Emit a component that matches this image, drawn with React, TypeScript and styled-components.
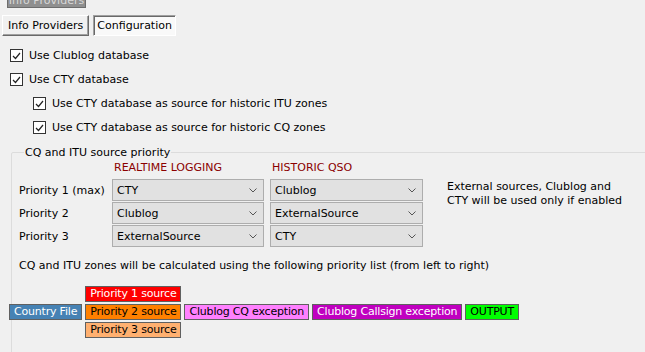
import React from 'react';
import styled, { createGlobalStyle } from 'styled-components';

const GlobalStyle = createGlobalStyle`
  body {
    margin: 0;
    background: #f0f0f0;
    font-family: "DejaVu Sans", Verdana, sans-serif;
    font-size: 11px;
    color: #000;
  }
`;

const Page = styled.div`
  width: 645px;
  height: 352px;
  overflow: hidden;
  background: #f0f0f0;
`;

const CutButton = styled.div`
  margin: -12px 0 0 7px;
  width: 79px;
  height: 20px;
  box-sizing: border-box;
  border: 1px solid #6d6d6d;
  background: #8f8f8f;
  color: #d8d8d8;
  text-align: center;
  line-height: 24px;
  overflow: hidden;
`;

const TabBar = styled.div`
  display: flex;
  gap: 4px;
  margin: 7px 0 0 2px;
`;

const Tab = styled.div<{ $active?: boolean }>`
  height: 21px;
  box-sizing: border-box;
  padding: 0 ${(p) => (p.$active ? '3px' : '5px')};
  line-height: 19px;
  border: 1px solid;
  border-color: ${(p) =>
    p.$active ? '#a0a0a0 #ffffff #ffffff #a0a0a0' : '#ffffff #696969 #696969 #ffffff'};
  background: ${(p) => (p.$active ? '#f9f9f9' : '#f0f0f0')};
  box-shadow: ${(p) =>
    p.$active ? 'inset 1px 1px 0 #696969' : 'inset -1px -1px 0 #a0a0a0'};
`;

const Checks = styled.div`
  display: flex;
  flex-direction: column;
  gap: 11px;
  margin: 13px 0 0 10px;
`;

const CheckRow = styled.label<{ $indent?: boolean }>`
  display: flex;
  align-items: center;
  gap: 6px;
  height: 13px;
  padding-left: ${(p) => (p.$indent ? '23px' : '0')};
`;

const Box = styled.span`
  width: 13px;
  height: 13px;
  box-sizing: border-box;
  border: 1px solid #333;
  background: #fff;
  display: flex;
  align-items: center;
  justify-content: center;
`;

const Group = styled.fieldset`
  margin: 12px 0 0 11px;
  padding: 0 0 0 7px;
  width: 700px;
  height: 210px;
  box-sizing: border-box;
  border: 1px solid #dcdcdc;
  border-radius: 2px;
`;

const Legend = styled.legend`
  padding: 0 1px;
  margin-left: 5px;
`;

const PriorityGrid = styled.div`
  display: grid;
  grid-template-columns: 87px 152px 153px 178px;
  column-gap: 6px;
  row-gap: 1px;
  align-items: center;
`;

const Header = styled.div`
  color: #8b0000;
  padding-left: 2px;
  height: 19px;
  line-height: 17px;
`;

const RowLabel = styled.div``;

const Combo = styled.div`
  height: 22px;
  box-sizing: border-box;
  border: 1px solid #adadad;
  background: #e1e1e1;
  display: flex;
  align-items: center;
  justify-content: space-between;
  padding: 0 6px 0 4px;
`;

const Note = styled.div`
  grid-column: 4;
  grid-row: 2 / span 2;
  align-self: start;
  padding: 1px 0 0 18px;
  line-height: 14px;
  white-space: nowrap;
`;

const Explain = styled.div`
  margin-top: 12px;
`;

const Flow = styled.div`
  display: flex;
  align-items: center;
  gap: 3px;
  margin: 14px 0 0 -10px;
`;

const Stack = styled.div`
  display: flex;
  flex-direction: column;
  gap: 2px;
`;

const Chip = styled.div<{ $bg: string; $fg: string }>`
  height: 16px;
  box-sizing: border-box;
  border: 1px solid #606060;
  background: ${(p) => p.$bg};
  color: ${(p) => p.$fg};
  font-size: 11px;
  letter-spacing: -0.2px;
  line-height: 14px;
  padding: 0 4px;
  white-space: nowrap;
`;

const Check = () => (
  <Box>
    <svg width="9" height="8" viewBox="0 0 9 8">
      <path d="M1 4 L3.5 6.5 L8 1" fill="none" stroke="#222" strokeWidth="1.2" />
    </svg>
  </Box>
);

const Chevron = () => (
  <svg width="8" height="5" viewBox="0 0 8 5">
    <path d="M0.5 0.5 L4 4 L7.5 0.5" fill="none" stroke="#555" strokeWidth="1" />
  </svg>
);

const rows = [
  ['Priority 1 (max)', 'CTY', 'Clublog'],
  ['Priority 2', 'Clublog', 'ExternalSource'],
  ['Priority 3', 'ExternalSource', 'CTY'],
];

export default function App() {
  return (
    <Page>
      <GlobalStyle />
      <CutButton>Info Providers</CutButton>
      <TabBar>
        <Tab>Info Providers</Tab>
        <Tab $active>Configuration</Tab>
      </TabBar>
      <Checks>
        <CheckRow><Check />Use Clublog database</CheckRow>
        <CheckRow><Check />Use CTY database</CheckRow>
        <CheckRow $indent><Check />Use CTY database as source for historic ITU zones</CheckRow>
        <CheckRow $indent><Check />Use CTY database as source for historic CQ zones</CheckRow>
      </Checks>
      <Group>
        <Legend>CQ and ITU source priority</Legend>
        <PriorityGrid>
          <div />
          <Header>REALTIME LOGGING</Header>
          <Header>HISTORIC QSO</Header>
          <div />
          {rows.map(([label, rt, hist], i) => (
            <React.Fragment key={label}>
              <RowLabel style={{ gridRow: i + 2 }}>{label}</RowLabel>
              <Combo style={{ gridRow: i + 2 }}>{rt}<Chevron /></Combo>
              <Combo style={{ gridRow: i + 2 }}>{hist}<Chevron /></Combo>
            </React.Fragment>
          ))}
          <Note>
            External sources, Clublog and
            <br />
            CTY will be used only if enabled
          </Note>
        </PriorityGrid>
        <Explain>
          CQ and ITU zones will be calculated using the following priority list (from left to right)
        </Explain>
        <Flow>
          <Chip $bg="#4682b4" $fg="#fff">Country File</Chip>
          <Stack>
            <Chip $bg="#ff0000" $fg="#fff">Priority 1 source</Chip>
            <Chip $bg="#ff8000" $fg="#000">Priority 2 source</Chip>
            <Chip $bg="#ffb070" $fg="#000">Priority 3 source</Chip>
          </Stack>
          <Chip $bg="#ff80ff" $fg="#000">Clublog CQ exception</Chip>
          <Chip $bg="#c000c0" $fg="#fff">Clublog Callsign exception</Chip>
          <Chip $bg="#00ff00" $fg="#000">OUTPUT</Chip>
        </Flow>
      </Group>
    </Page>
  );
}
